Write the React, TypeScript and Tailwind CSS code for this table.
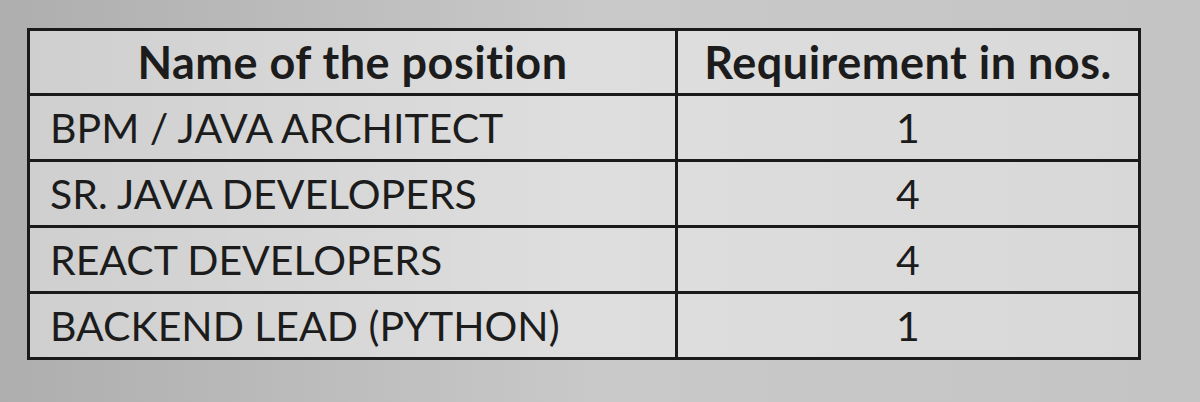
import React from "react";

const rows = [
  { name: "BPM / JAVA ARCHITECT", count: "1" },
  { name: "SR. JAVA DEVELOPERS", count: "4" },
  { name: "REACT DEVELOPERS", count: "4" },
  { name: "BACKEND LEAD (PYTHON)", count: "1" },
];

const App = () => {
  return (
    <div className="w-[1200px] h-[402px] bg-gradient-to-r from-[#aeaeae] via-[#c9c9c9] to-[#c4c4c4] pt-[28px] pl-[27px] overflow-hidden font-['Lato',sans-serif] text-[#1c1c1c]">
      <table className="w-[1114px] border-collapse border-[3px] border-[#1a1a1a] bg-gradient-to-r from-[#cfcfcf] via-[#dedede] to-[#d8d8d8]">
        <thead>
          <tr className="h-[65px]">
            <th className="w-[648px] border-[3px] border-[#1a1a1a] text-[45px] leading-none font-bold text-center tracking-[0.5px]">
              Name of the position
            </th>
            <th className="border-[3px] border-[#1a1a1a] text-[45px] leading-none font-bold text-center tracking-[0.5px]">
              Requirement in nos.
            </th>
          </tr>
        </thead>
        <tbody>
          {rows.map((r) => (
            <tr key={r.name} className="h-[66px]">
              <td className="border-[3px] border-[#1a1a1a] text-[41px] leading-none pl-[20px] text-left">
                {r.name}
              </td>
              <td className="border-[3px] border-[#1a1a1a] text-[41px] leading-none text-center">
                {r.count}
              </td>
            </tr>
          ))}
        </tbody>
      </table>
    </div>
  );
};

export default App;
